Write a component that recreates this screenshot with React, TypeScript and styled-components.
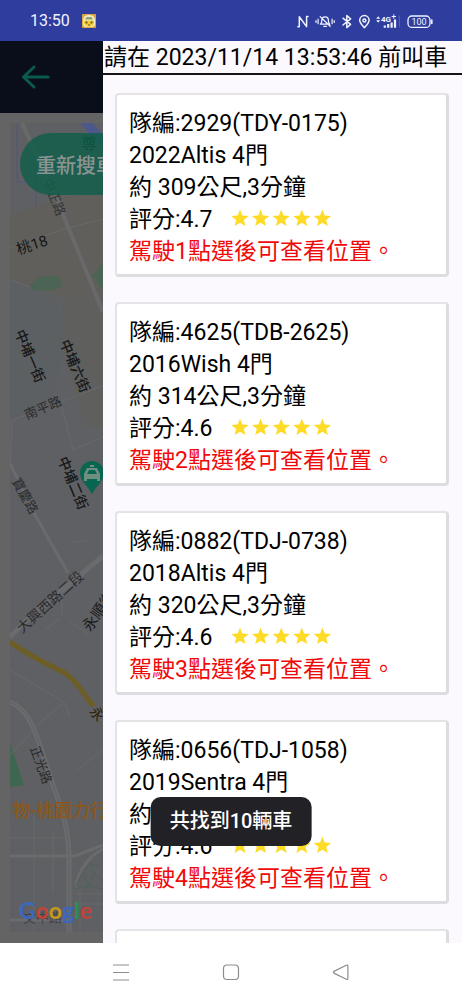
import React from 'react';
import styled, { createGlobalStyle } from 'styled-components';

const GlobalStyle = createGlobalStyle`
  *, *::before, *::after { box-sizing: border-box; }
  body {
    margin: 0;
    background: #fff;
    color: #000;
    font-family: Roboto, "Noto Sans CJK TC", sans-serif;
  }
  button { font: inherit; color: inherit; border: 0; padding: 0; background: none; cursor: pointer; }
`;

const Screen = styled.div`
  display: flex;
  flex-direction: column;
  height: 100vh;
  position: relative;
`;

const StatusBar = styled.header`
  flex: none;
  display: flex;
  align-items: center;
  height: 41px;
  padding: 0 29px 0 30px;
  background: #2e3d9e;
  color: #f1f3ff;
  font-size: 16px;
`;

const AppBadge = styled.svg`
  width: 14px;
  height: 14px;
  margin-left: 12px;
`;

const StatusIcons = styled.div`
  display: flex;
  align-items: center;
  margin-left: auto;
  svg { display: block; }
`;

const Stage = styled.main`
  flex: 1;
  min-height: 0;
  display: grid;
  grid-template: minmax(0, 1fr) / minmax(0, 1fr);
`;

const MapPage = styled.section`
  grid-area: 1 / 1;
  display: flex;
  flex-direction: column;
  background: #646464;
`;

const MapHeader = styled.div`
  flex: none;
  display: flex;
  align-items: center;
  height: 72px;
  padding-left: 20px;
  background: #090e1a;
`;

const BackButton = styled.button`
  display: flex;
  color: #0b5b4b;
`;

const MapFrame = styled.div`
  flex: 1;
  min-height: 0;
  position: relative;
  margin: 10px 10px 11px;
  overflow: hidden;
  background: #5f6063;
`;

const MapDrawing = styled.svg`
  display: block;
  width: 100%;
  height: 100%;
`;

const SearchAgain = styled.button`
  position: absolute;
  top: 10px;
  left: 10px;
  height: 62px;
  padding: 0 16px;
  border-radius: 31px;
  background: rgba(17, 94, 74, 0.84);
  color: #8b9492;
  font-size: 20px;
  font-weight: 500;
`;

const Drawer = styled.aside`
  grid-area: 1 / 1;
  z-index: 1;
  display: flex;
  flex-direction: column;
  min-height: 0;
  margin-left: 103px;
  background: #fbf9fd;
`;

const Deadline = styled.h1`
  flex: none;
  margin: 0;
  border-bottom: 2px solid #141414;
  font-size: 23px;
  font-weight: 400;
  line-height: 30px;
  padding: 2px 0 0 1px;
  white-space: nowrap;
`;

const CarList = styled.ul`
  flex: 1;
  min-height: 0;
  display: flex;
  flex-direction: column;
  gap: 25px;
  margin: 0;
  padding: 18px 13px 0 12px;
  overflow: hidden;
  list-style: none;
`;

const CarItem = styled.li`
  flex: none;
`;

const CarCard = styled.button`
  display: block;
  width: 100%;
  min-height: 184px;
  padding: 13px 12px 6px;
  border: 2px solid #e4e3e6;
  border-right: 3px solid #dddce0;
  border-bottom: 3px solid #dddce0;
  border-radius: 4px;
  background: #fff;
  text-align: left;
  font-size: 23px;
`;

const CarLine = styled.span<{ $alert?: boolean }>`
  display: flex;
  align-items: center;
  height: 32px;
  line-height: 32px;
  white-space: pre;
  color: ${(p) => (p.$alert ? '#f10a0a' : '#000')};
`;

const Stars = styled.svg`
  width: 101px;
  height: 22px;
  margin-left: 18px;
`;

const Toast = styled.div`
  position: absolute;
  z-index: 2;
  left: 50%;
  bottom: 154px;
  transform: translateX(-50%);
  padding: 0 19px;
  border-radius: 10px;
  background: #222126;
  color: #fff;
  font-size: 20px;
  font-weight: 500;
  line-height: 49px;
  white-space: nowrap;
`;

const NavBar = styled.nav`
  flex: none;
  display: flex;
  justify-content: center;
  align-items: center;
  gap: 86px;
  height: 57px;
  background: #fff;
`;

const NavButton = styled.button`
  display: flex;
  color: #8d8d8d;
`;

type Car = { id: string; model: string; distance: string; rating: string };

const cars: Car[] = [
  { id: '2929(TDY-0175)', model: '2022Altis 4門', distance: '約 309公尺,3分鐘', rating: '4.7' },
  { id: '4625(TDB-2625)', model: '2016Wish 4門', distance: '約 314公尺,3分鐘', rating: '4.6' },
  { id: '0882(TDJ-0738)', model: '2018Altis 4門', distance: '約 320公尺,3分鐘', rating: '4.6' },
  { id: '0656(TDJ-1058)', model: '2019Sentra 4門', distance: '約', rating: '4.6' },
];

const STAR = 'M9 0.6L11.3 6.5L17.7 6.9L12.8 10.9L14.4 17.1L9 13.7L3.6 17.1L5.2 10.9L0.3 6.9L6.7 6.5Z';

function FiveStars() {
  return (
    <Stars viewBox="0 0 101 22" role="img" aria-label="五顆星">
      {[0, 1, 2, 3, 4].map((i) => (
        <path key={i} d={STAR} fill="#fddb27" transform={`translate(${i * 20.6} 0)`} />
      ))}
    </Stars>
  );
}

function StatusGlyphs() {
  return (
    <StatusIcons>
      <svg width="136" height="20" viewBox="297 10 136 20" fill="none" stroke="#f1f3ff" strokeWidth="1.5" strokeLinecap="round" strokeLinejoin="round" aria-hidden="true">
        <path d="M299.300 25.600V15.800L306.600 25.600V15.600M297.900 25.700h1.400M306.600 15.400h1.400" strokeWidth="1.500" />
        <path d="M320.400 23.200h9.400c-1.500-1.200-1.400-2.200-1.400-3.600 0-2.200-1.200-3.800-3.300-3.800s-3.300 1.600-3.300 3.800c0 1.400.1 2.400-1.400 3.600zM323.800 25.300h2.600M320.200 15.600l10 9.600" strokeWidth="1.300" />
        <path d="M318.100 18.200v4.500M316 19.500v2M332.100 18.200v4.500M334.200 19.500v2" strokeWidth="1.200" />
        <path d="M343 17.200l7.600 6.200-3.800 3.200V14.600l3.800 3.200-7.600 6.200" strokeWidth="1.500" />
        <path d="M364.400 26.600c-2.800-2.800-4.700-4.900-4.700-7.300a4.700 4.700 0 0 1 9.400 0c0 2.400-1.900 4.500-4.700 7.300z" />
        <circle cx="364.400" cy="19.400" r="1.500" />
        <path d="M376.200 17.700l2-2.500 2 2.500zM376.200 19.200l2 2.500 2-2.500z" fill="#f1f3ff" stroke="none" />
        <path d="M384.800 26.800v-2.400M388.200 26.800v-3.800M391.600 26.800v-5.200M395 26.800V18.600" strokeWidth="2.200" strokeLinecap="butt" />
        <path d="M392 15.500h3.600M393.800 13.700v3.600" strokeWidth="1" />
        <path d="M399.400 15v11" stroke="#5663b4" strokeWidth="1" />
        <text x="381" y="20.500" fill="#f1f3ff" stroke="none" fontSize="8" fontWeight="700" fontFamily="Roboto, sans-serif">4G</text>
        <rect x="408" y="15" width="22" height="11.400" rx="4" strokeWidth="1.300" />
        <path d="M431.800 19v3.400" strokeWidth="1.600" />
        <text x="419" y="24" textAnchor="middle" fill="#f1f3ff" stroke="none" fontSize="9" fontFamily="Roboto, sans-serif">100</text>
      </svg>
    </StatusIcons>
  );
}

type LabelProps = { x: number; y: number; angle: number; size?: number; fill?: string; weight?: number; children: string };

function RoadLabel({ x, y, angle, size = 14, fill = '#2a2b2d', weight = 400, children }: LabelProps) {
  return (
    <text transform={`translate(${x} ${y}) rotate(${angle})`} textAnchor="middle" dominantBaseline="central" fontSize={size} fill={fill} fontWeight={weight}>
      {children}
    </text>
  );
}

function CityMap() {
  return (
    <MapDrawing aria-label="地圖">
      <g transform="translate(-10 -123)" fill="none">
        <path d="M10 123H450V935H10Z" fill="#5f6063" />
        <path d="M10 215L62 198L110 190V310L70 300L10 280Z" fill="#605f5b" />
        <path d="M62 300L110 290V430L84 425L66 360Z" fill="#5f605e" />
        <path d="M10 280L55 296L66 330L54 400L10 420Z" fill="#5d6063" />
        <path d="M30 285L39 277L58 275L63 287L47 291L34 290Z" fill="#4c6454" />
        <path d="M92 276L103 263V290Z" fill="#4c6454" />
        <path d="M10 743L24 785L10 787Z" fill="#3f6650" />
        <path d="M17 123V182H30M36 170V207" stroke="#52557a" />
        <path d="M80 123L96 141L102 147V133L92 123Z" fill="#4c588c" />
        <path d="M22 123L55 195L103 312" stroke="#69696a" strokeWidth="4" />
        <path d="M10 248L64 229L103 219M10 421L55 404L103 386M10 280L30 287M60 400L73 450L103 437M12 421L10 470" stroke="#68696a" strokeWidth="1" />
        <path d="M10 463L30 506L68 573" stroke="#6a6b6d" strokeWidth="3" />
        <path d="M10 637L26 621L80 575L103 556" stroke="#6a6b6d" strokeWidth="5" />
        <path d="M62 590V615M73 543L87 540M45 630L60 618M68 620L88 634M10 670L64 702L43 720L10 755M64 702L70 717M77 770L103 750" stroke="#68696b" />
        <path d="M10 642C31 657 49 665 65 673C82 685 85 699 94 706" stroke="#6c5e24" strokeWidth="5" />
        <path d="M10 702C32 711 37 737 52 782C62 811 69 828 69 860V935" stroke="#6b6c6e" strokeWidth="5" />
        <path d="M10 702C32 711 37 737 52 782C62 811 69 828 69 860V935" stroke="#5f6164" />
        <path d="M10 856H75L103 845M10 920H69M75 890C77 870 91 855 103 849" stroke="#6a6b6d" strokeWidth="3" />
        <path d="M34 815V935M53 833V892M10 838H66M52 910H66M80 889V935M76 894H103M75 904H103" stroke="#68696b" />
        <path d="M74 889L83 872L90 863L98 866L103 862M74 889L90 886L103 889M83 872L88 887M90 863L94 874L88 887M94 874L103 880" stroke="#4c6258" />

        <RoadLabel x={89} y={143} angle={0} size={16} fill="#0c1c1a" weight={500}>尊</RoadLabel>
        <RoadLabel x={54} y={197} angle={68} size={13} fill="#343435">中正路</RoadLabel>
        <RoadLabel x={32} y={245} angle={-18} size={15} fill="#171717">桃18</RoadLabel>
        <RoadLabel x={30} y={356} angle={67} fill="#17181a" weight={500}>中埔一街</RoadLabel>
        <RoadLabel x={75} y={366} angle={67} fill="#17181a" weight={500}>中埔六街</RoadLabel>
        <RoadLabel x={43} y={408} angle={-23} size={13}>南平路</RoadLabel>
        <RoadLabel x={73} y={483} angle={67} fill="#17181a" weight={500}>中埔二街</RoadLabel>
        <RoadLabel x={25} y={496} angle={61} size={13}>寶慶路</RoadLabel>
        <RoadLabel x={50} y={602} angle={-42} size={14}>大興西路二段</RoadLabel>
        <RoadLabel x={99} y={611} angle={-55} size={15} fill="#17181a">永順街</RoadLabel>
        <RoadLabel x={97} y={714} angle={50} size={14} fill="#2c2008">永</RoadLabel>
        <RoadLabel x={41} y={765} angle={70} size={13}>正光路</RoadLabel>
        <text x="12" y="817" fontSize="18" fontWeight="500" fill="#8c5718">物-桃園力行</text>
        <text x="23" y="922" fontSize="13" fill="#434447">文中路</text>
        <path d="M92 494C88 486 80 481 80 473A12 12 0 0 1 104 473C104 481 96 486 92 494Z" fill="#086650" />
        <path d="M84 474l3-6h10l3 6v7h-3v-2H87v2h-3zM87 474h10l-2-4h-6zM90 465h4v2h-4z" fill="#6f8f83" fillRule="evenodd" />
        <text x="19" y="919" fontSize="23" fontFamily="Lato, sans-serif" fontWeight="700">
          <tspan fill="#3a68c0">G</tspan>
          <tspan fill="#c04238">o</tspan>
          <tspan fill="#c49a18">o</tspan>
          <tspan fill="#3a68c0">g</tspan>
          <tspan fill="#2c914a">l</tspan>
          <tspan fill="#c04238">e</tspan>
        </text>
      </g>
    </MapDrawing>
  );
}

export default function App() {
  return (
    <>
      <GlobalStyle />
      <Screen>
        <StatusBar>
          <time>13:50</time>
          <AppBadge viewBox="0 0 14 14" aria-hidden="true">
            <rect width="14" height="14" rx="1" fill="#d9a844" />
            <path d="M1 7C1 3 3 1 7 1s6 2 6 6v4l-2 2H3l-2-2z" fill="#f3ecc4" />
            <path d="M4.500 3h5l1.500 2.500H3z" fill="#8fa578" />
            <path d="M2 6.500h10v3.500l-2.500 2.500h-5L2 10z" fill="#f3cf35" />
            <path d="M3.500 7.500h2v2h-2zM8.500 7.500h2v2h-2zM6 10.500h2v1H6z" fill="#6b5c2a" />
          </AppBadge>
          <StatusGlyphs />
        </StatusBar>

        <Stage>
          <MapPage>
            <MapHeader>
              <BackButton type="button" aria-label="返回">
                <svg width="30" height="30" viewBox="0 0 30 30" fill="none" stroke="currentColor" strokeWidth="3" strokeLinecap="round" strokeLinejoin="round">
                  <path d="M28 15H3.500M14 5L3.500 15L14 25" />
                </svg>
              </BackButton>
            </MapHeader>
            <MapFrame>
              <CityMap />
              <SearchAgain type="button">重新搜車</SearchAgain>
            </MapFrame>
          </MapPage>

          <Drawer>
            <Deadline>請在 2023/11/14 13:53:46 前叫車</Deadline>
            <CarList>
              {cars.map((car, i) => (
                <CarItem key={car.id}>
                  <CarCard type="button">
                    <CarLine>隊編:{car.id}</CarLine>
                    <CarLine>{car.model}</CarLine>
                    <CarLine>{car.distance}</CarLine>
                    <CarLine>
                      評分:{car.rating}
                      <FiveStars />
                    </CarLine>
                    <CarLine $alert>駕駛{i + 1}點選後可查看位置。</CarLine>
                  </CarCard>
                </CarItem>
              ))}
              <CarItem>
                <CarCard type="button" aria-label="下一輛車" />
              </CarItem>
            </CarList>
          </Drawer>
        </Stage>

        <NavBar>
          <NavButton type="button" aria-label="最近使用">
            <svg width="24" height="24" viewBox="0 0 24 24" fill="none" stroke="currentColor" strokeWidth="1.200">
              <path d="M4 5H20M4 12.500H20M4 20H20" />
            </svg>
          </NavButton>
          <NavButton type="button" aria-label="主畫面">
            <svg width="24" height="24" viewBox="0 0 24 24" fill="none" stroke="currentColor" strokeWidth="1.200">
              <rect x="4.500" y="5" width="15" height="14.500" rx="3.500" />
            </svg>
          </NavButton>
          <NavButton type="button" aria-label="返回上一頁">
            <svg width="24" height="24" viewBox="0 0 24 24" fill="none" stroke="currentColor" strokeWidth="1.200" strokeLinejoin="round">
              <path d="M4.900 11.400L17.300 5.200Q18.900 4.600 18.900 6V18.500Q18.900 19.900 17.300 19.300L4.900 13.100Q3.800 12.200 4.900 11.400Z" />
            </svg>
          </NavButton>
        </NavBar>

        <Toast role="status">共找到10輛車</Toast>
      </Screen>
    </>
  );
}
